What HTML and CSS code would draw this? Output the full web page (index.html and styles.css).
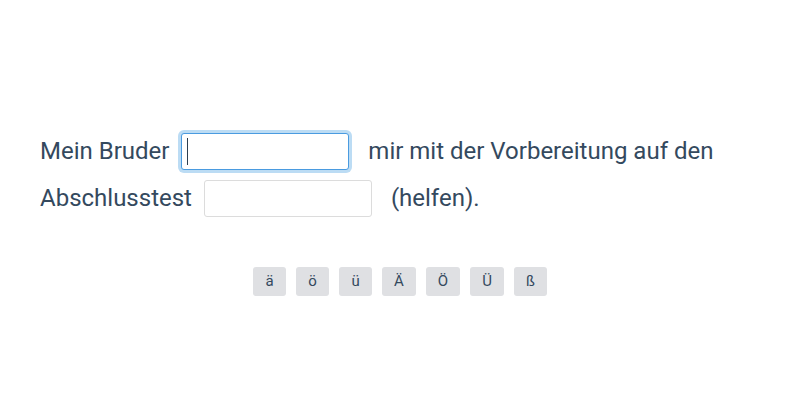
FILE: index.html
```html
<!DOCTYPE html>
<html lang="de">
<head>
<meta charset="utf-8">
<link rel="stylesheet" href="styles.css">
</head>
<body>
<main class="exercise">
  <p class="sentence">Mein Bruder <span class="gap gap-focus"><span class="caret"></span></span> mir mit der Vorbereitung auf den Abschlusstest <span class="gap"></span> (helfen).</p>
  <div class="keys">
    <button class="key">ä</button>
    <button class="key">ö</button>
    <button class="key">ü</button>
    <button class="key">Ä</button>
    <button class="key">Ö</button>
    <button class="key">Ü</button>
    <button class="key">ß</button>
  </div>
</main>
</body>
</html>
```
FILE: styles.css
```css
html, body {
  margin: 0;
  padding: 0;
  background: #ffffff;
}
body {
  width: 800px;
  height: 400px;
  font-family: Roboto, "Liberation Sans", sans-serif;
  color: #34495e;
}
.exercise {
  padding: 128px 40px 0 40px;
}
.sentence {
  margin: 0;
  width: 720px;
  font-size: 24px;
  line-height: 47px;
}
.gap {
  display: inline-block;
  box-sizing: border-box;
  width: 168px;
  height: 37px;
  margin: 0 13px 0 6px;
  vertical-align: middle;
  border: 1px solid #dcdcdc;
  border-radius: 3px;
  background: #fff;
  position: relative;
  top: -1px;
}
.gap-focus {
  border-color: #4a9be0;
  box-shadow: 0 0 0 3px #bcdcf4;
}
.caret {
  position: absolute;
  left: 5px;
  top: 4px;
  width: 1px;
  height: 27px;
  background: #2c3e50;
}
.keys {
  display: flex;
  justify-content: center;
  gap: 10px;
  margin-top: 45px;
}
.key {
  font-family: Roboto, "Liberation Sans", sans-serif;
  font-size: 15px;
  color: #34495e;
  background: #dfe0e3;
  border: none;
  border-radius: 3px;
  height: 29px;
  min-width: 33px;
  padding: 0 12px;
  line-height: 29px;
}
```
